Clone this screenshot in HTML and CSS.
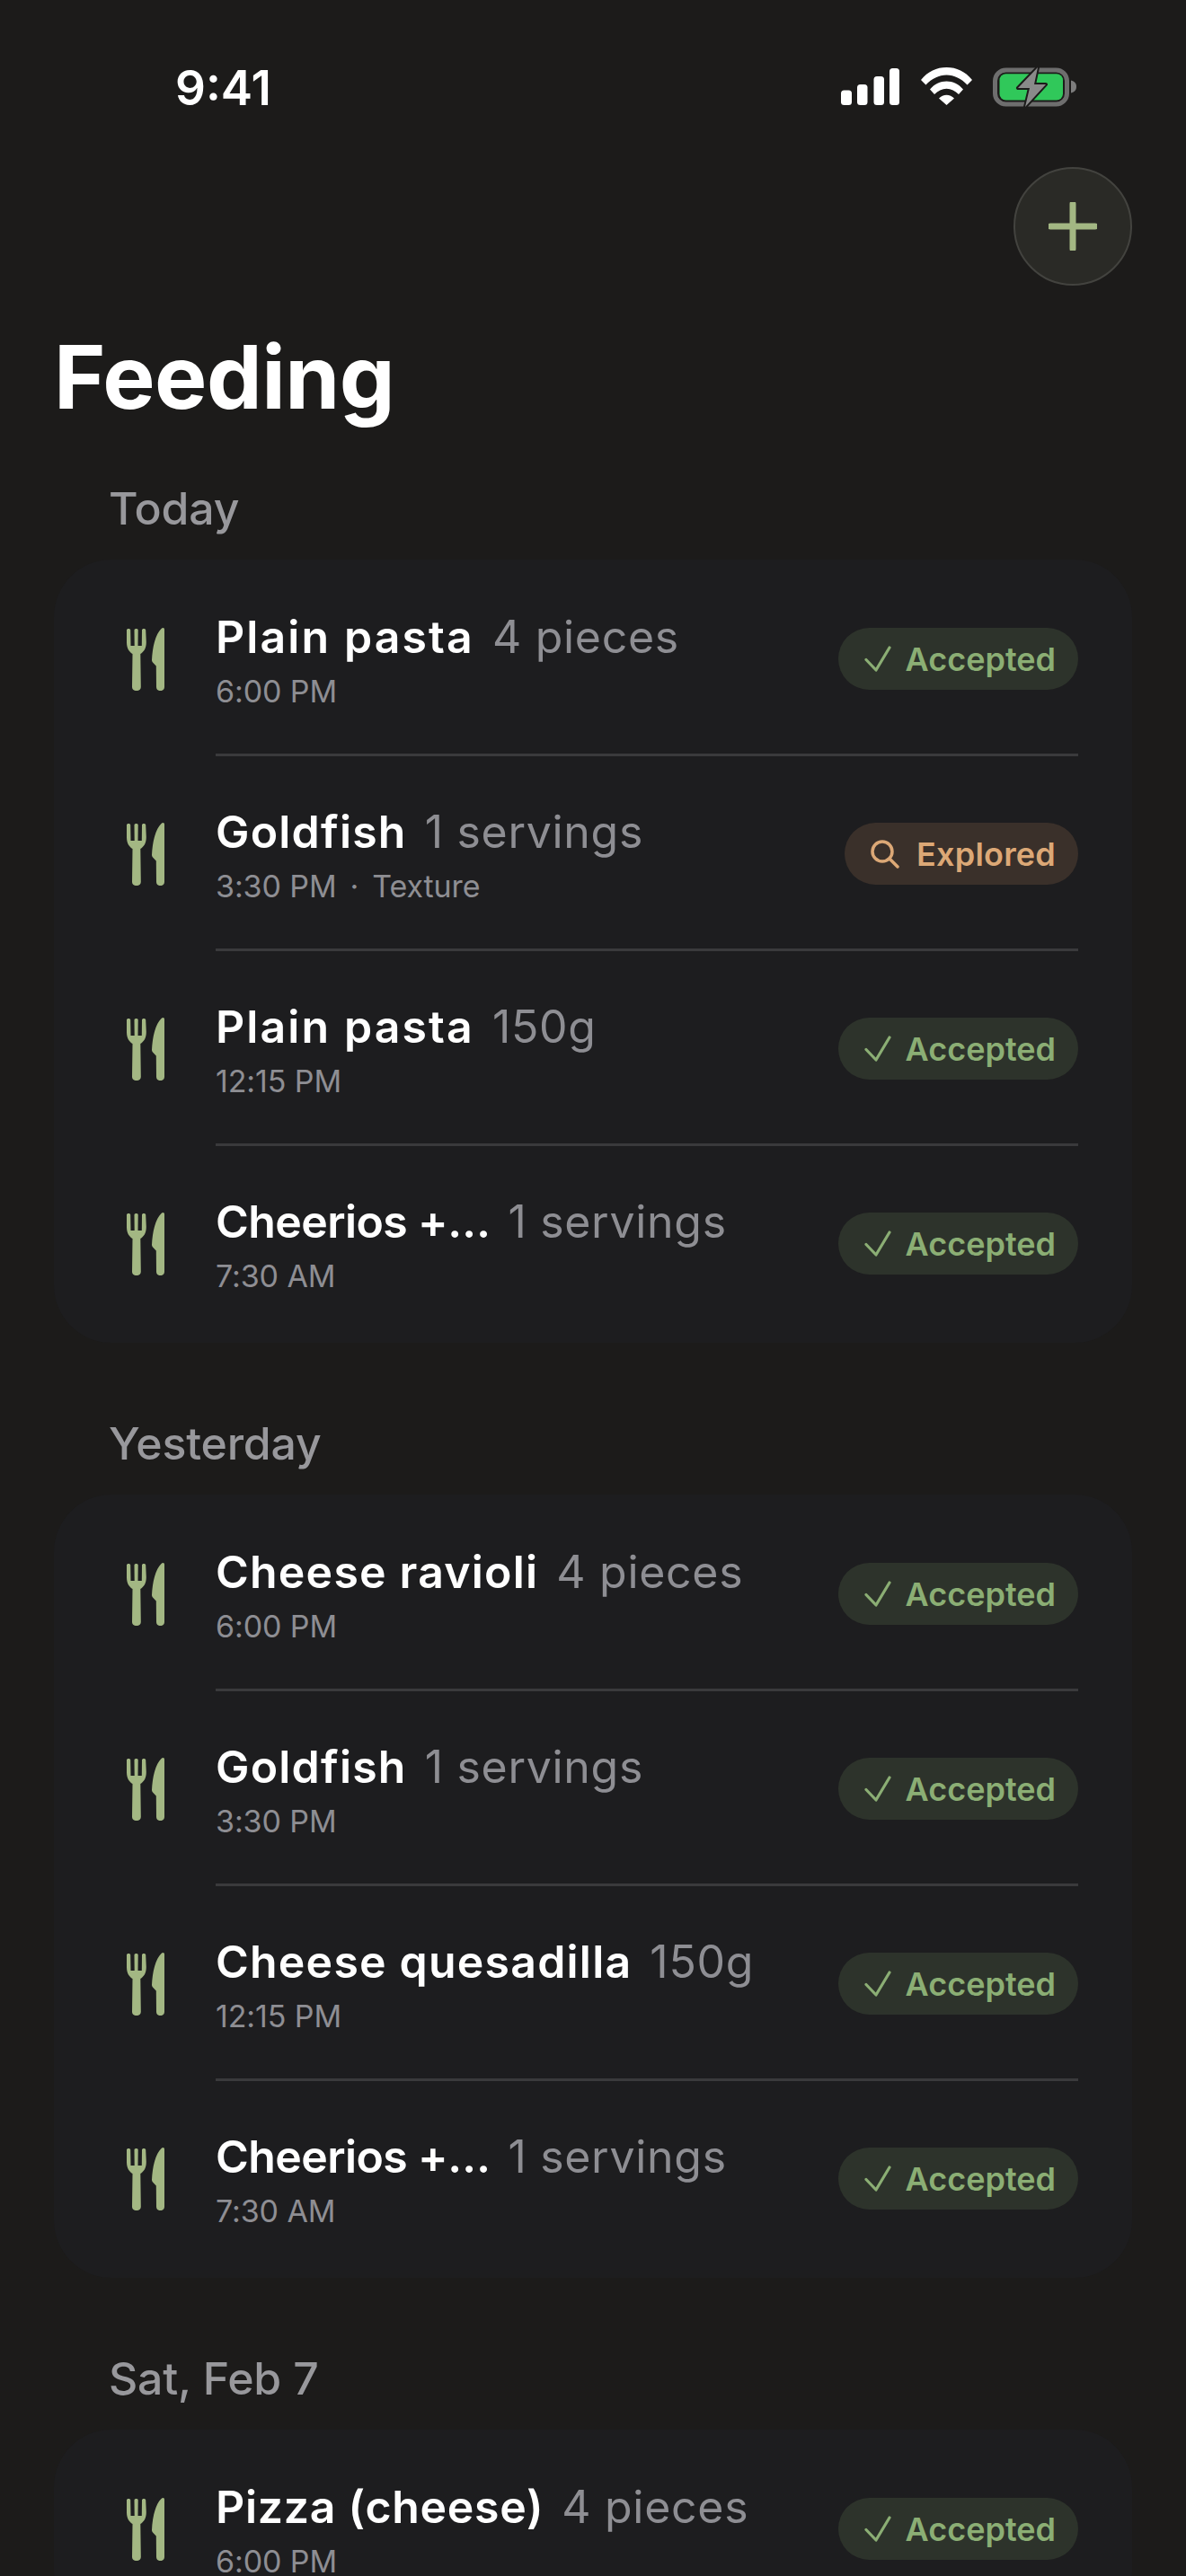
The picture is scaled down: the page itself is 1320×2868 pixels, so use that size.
FILE: index.html
```html
<!DOCTYPE html>
<html lang="en">
<head>
<meta charset="utf-8">
<title>Feeding</title>
<link rel="stylesheet" href="styles.css">
</head>
<body>
<svg class="defs" width="0" height="0" aria-hidden="true">
  <symbol id="food" viewBox="0 0 42 70">
    <path d="M0 2.500C0 .5 4.200 .5 4.200 2.500L4.500 20H8.700L8.500 2.500C8.500 .5 12.700 .5 12.700 2.500L12.500 20H16.800L17 2.500C17 .5 21.200 .5 21.200 2.500L21.800 16C21.800 23 18.800 27 15.300 29L15.800 66C15.800 71.500 6 71.500 6 66L6.500 29C3 27 0 23 0 16Z"/>
    <path d="M40.500 0C41.500 0 42 .8 42 2V66C42 71.500 33 71.500 33 66L32.800 42.500L29 38.500C28.300 37.700 28 37 28 36C28.500 22 32 7 38.500 1C39.200 .3 39.800 0 40.500 0Z"/>
  </symbol>
  <symbol id="check" viewBox="0 0 30 30">
    <path d="M2 15.500 13 27 28 2" fill="none" stroke="currentColor" stroke-width="3.200" stroke-linecap="round" stroke-linejoin="round"/>
  </symbol>
  <symbol id="search" viewBox="0 0 32 32">
    <circle cx="13" cy="13" r="11" fill="none" stroke="currentColor" stroke-width="3.500"/>
    <path d="M21 21l9 9" fill="none" stroke="currentColor" stroke-width="3.500" stroke-linecap="round"/>
  </symbol>
</svg>

<div class="status">
  <span class="clock">9:41</span>
  <div class="status-icons">
    <svg class="signal" viewBox="0 0 66 41"><rect x="0" y="24.500" width="12" height="16.500" rx="3.500"/><rect x="18" y="18" width="11.500" height="23" rx="3.500"/><rect x="36.500" y="9" width="11.500" height="32" rx="3.500"/><rect x="54" y="0" width="11" height="41" rx="3.500"/></svg>
    <svg class="wifi" viewBox="0 0 57 42"><path d="M0 14C7.500 4.500 17.500 0 28.500 0S49.500 4.500 57 14l-5.500 5.500C45 12.500 37 8.500 28.500 8.500S12 12.500 5.500 19.500z"/><path d="M10 24.500C15 18.500 21.500 15.500 28.500 15.500s13.500 3 18.500 9L42 30c-3.800-4-8.500-6.300-13.500-6.300S18.800 26 15 30z"/><path d="M20 34.500c2.300-2.500 5.200-3.800 8.500-3.800s6.200 1.300 8.500 3.800L28.500 42z"/></svg>
    <svg class="battery" viewBox="0 0 94 46"><rect x="2.500" y="4" width="80" height="38" rx="12" fill="none" stroke="#6e6e6e" stroke-width="5"/><rect x="7.500" y="8.200" width="70.500" height="29.300" rx="7" fill="#30c85a"/><path d="M87 15.500c4 .8 6 3.500 6 7s-2 6.200-6 7z" fill="#7d7d7d"/><path d="M50 1 28 24h13l-5 21 23-25H46z" fill="#8a8a8a" stroke="#1c1b1a" stroke-width="4" paint-order="stroke" stroke-linejoin="round"/></svg>
  </div>
</div>

<header class="top">
  <button class="add" type="button" aria-label="Add"><svg viewBox="0 0 54 54"><path d="M27 2v50M2 27h50"/></svg></button>
  <h1>Feeding</h1>
</header>

<main>
  <section class="group">
    <h2>Today</h2>
    <div class="card">
      <div class="row"><svg class="food"><use href="#food"/></svg><div class="body"><div class="line"><b class="wide">Plain pasta</b><i>4 pieces</i></div><p>6:00 PM</p></div><span class="pill ok"><svg><use href="#check"/></svg>Accepted</span></div>
      <div class="row"><svg class="food"><use href="#food"/></svg><div class="body"><div class="line"><b>Goldfish</b><i>1 servings</i></div><p>3:30 PM<span class="dot">·</span>Texture</p></div><span class="pill ex"><svg><use href="#search"/></svg>Explored</span></div>
      <div class="row"><svg class="food"><use href="#food"/></svg><div class="body"><div class="line"><b class="wide">Plain pasta</b><i>150g</i></div><p>12:15 PM</p></div><span class="pill ok"><svg><use href="#check"/></svg>Accepted</span></div>
      <div class="row"><svg class="food"><use href="#food"/></svg><div class="body"><div class="line"><b class="cut">Cheerios +…</b><i>1 servings</i></div><p>7:30 AM</p></div><span class="pill ok"><svg><use href="#check"/></svg>Accepted</span></div>
    </div>
  </section>
  <section class="group">
    <h2>Yesterday</h2>
    <div class="card">
      <div class="row"><svg class="food"><use href="#food"/></svg><div class="body"><div class="line"><b>Cheese ravioli</b><i>4 pieces</i></div><p>6:00 PM</p></div><span class="pill ok"><svg><use href="#check"/></svg>Accepted</span></div>
      <div class="row"><svg class="food"><use href="#food"/></svg><div class="body"><div class="line"><b>Goldfish</b><i>1 servings</i></div><p>3:30 PM</p></div><span class="pill ok"><svg><use href="#check"/></svg>Accepted</span></div>
      <div class="row"><svg class="food"><use href="#food"/></svg><div class="body"><div class="line"><b>Cheese quesadilla</b><i>150g</i></div><p>12:15 PM</p></div><span class="pill ok"><svg><use href="#check"/></svg>Accepted</span></div>
      <div class="row"><svg class="food"><use href="#food"/></svg><div class="body"><div class="line"><b class="cut">Cheerios +…</b><i>1 servings</i></div><p>7:30 AM</p></div><span class="pill ok"><svg><use href="#check"/></svg>Accepted</span></div>
    </div>
  </section>
  <section class="group">
    <h2>Sat, Feb 7</h2>
    <div class="card">
      <div class="row"><svg class="food"><use href="#food"/></svg><div class="body"><div class="line"><b class="snug">Pizza (cheese)</b><i>4 pieces</i></div><p>6:00 PM</p></div><span class="pill ok"><svg><use href="#check"/></svg>Accepted</span></div>
    </div>
  </section>
</main>
</body>
</html>
```
FILE: styles.css
```css
* { box-sizing: border-box; margin: 0; padding: 0; }
html, body { height: 2868px; overflow: hidden; }
body { background: #1c1b1a; color: #fff; font-family: "Inter", "Liberation Sans", sans-serif; }
.defs { position: absolute; }

.status { height: 186px; padding: 68px 121px 0 195px; display: flex; justify-content: space-between; align-items: flex-start; }
.clock { font: 600 53px/60px "Inter", sans-serif; }
.status-icons { display: flex; align-items: flex-start; gap: 23px; padding-top: 6px; }
.signal { width: 66px; height: 41px; margin-top: 2px; fill: #fff; }
.wifi { width: 57px; height: 42px; margin-top: 1px; fill: #fff; }
.battery { width: 94px; height: 46px; }

.top { padding: 0 60px; }
.add { display: block; margin-left: auto; width: 132px; height: 132px; border-radius: 50%; background: #2a2a26; border: 2px solid #43433f; padding: 37px; }
.add svg { display: block; width: 54px; height: 54px; fill: none; stroke: #a3b783; stroke-width: 7; stroke-linecap: round; }
h1 { font: 700 98px/116px "Inter", sans-serif; margin-top: 44px; letter-spacing: -0.5px; }

main { margin-top: 58px; }
.group { margin-bottom: 82px; padding: 0 60px; }
h2 { font: 500 50px/60px "Inter", sans-serif; color: #98989c; padding-left: 61px; margin-bottom: 27px; letter-spacing: -.2px; }
.card { background: #1d1d1f; border-radius: 64px; padding: 2px 60px 2px 81px; }

.row { display: flex; align-items: center; height: 217px; position: relative; }
.row + .row::before { content: ""; position: absolute; top: -3px; left: 99px; right: 0; height: 3px; background: #3a3a3c; }
.food { width: 42px; height: 70px; fill: #a3b783; flex: none; margin-right: 57px; }
.body { flex: 1; min-width: 0; padding-top: 2px; font-feature-settings: "cv11"; }
.line { display: flex; align-items: baseline; gap: 20px; white-space: nowrap; }
.line b { font: 600 50px/62px "Inter", sans-serif; color: #fff; letter-spacing: 1.2px; }
.line b.wide { letter-spacing: 2.1px; }
.line b.snug { letter-spacing: .7px; }
.line b.cut { letter-spacing: -.6px; }
.line i { font: 400 50px/62px "Inter", sans-serif; color: #8e8e93; letter-spacing: .7px; }
.body p { font: 400 34px/44px "Inter", sans-serif; color: #8e8e93; margin-top: 8px; letter-spacing: -.1px; }
.dot { margin: 0 15px; }

.pill { display: flex; align-items: center; height: 69px; border-radius: 35px; padding: 0 25px 0 29px; font: 600 36px/1 "Inter", sans-serif; flex: none; font-feature-settings: "cv11"; }
.pill svg { width: 30px; height: 30px; margin-right: 16px; }
.ok { background: #2d332b; color: #8bae74; }
.ex { background: #3a302a; color: #dca876; letter-spacing: .2px; }
.ex svg { width: 32px; height: 32px; margin-right: 19px; }
```
